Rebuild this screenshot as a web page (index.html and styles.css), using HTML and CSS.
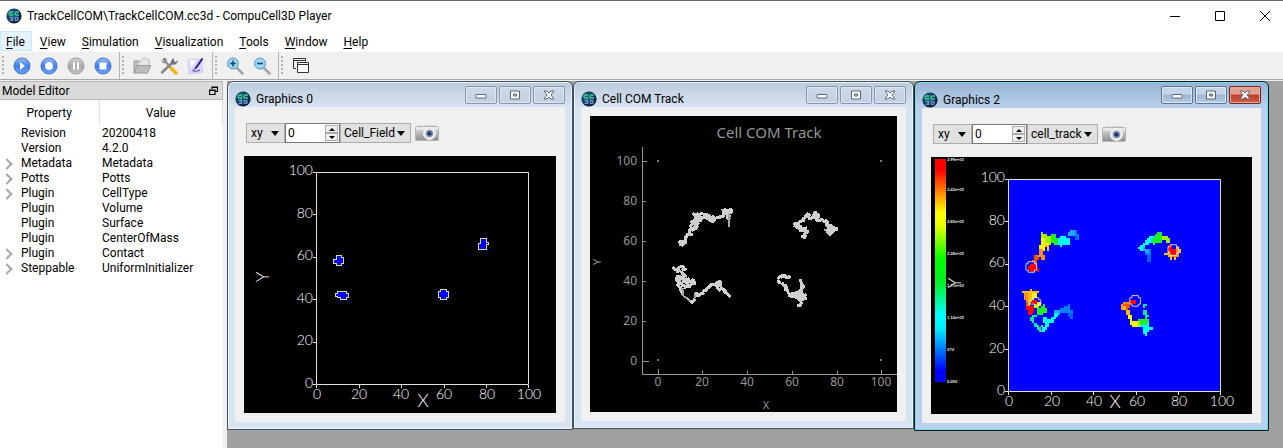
FILE: index.html
```html
<!DOCTYPE html>
<html lang="en">
<head>
    <meta charset="UTF-8">
    <meta name="viewport" content="width=device-width, initial-scale=1.0">
    <title>TrackCellCOM\TrackCellCOM.cc3d - CompuCell3D Player</title>
    <link rel="stylesheet" href="styles.css">
</head>
<body>
    <!-- shared icons -->
    <svg class="defs" width="0" height="0" aria-hidden="true">
        <defs>
            <radialGradient id="globe" cx="40%" cy="40%" r="60%">
                <stop offset="0" stop-color="#1c7d86"/>
                <stop offset="0.6" stop-color="#12406e"/>
                <stop offset="1" stop-color="#0a1836"/>
            </radialGradient>
            <linearGradient id="blueBall" x1="0" y1="0" x2="0" y2="1">
                <stop offset="0" stop-color="#9cc0fb"/>
                <stop offset="0.5" stop-color="#3f7cf0"/>
                <stop offset="1" stop-color="#6ea6ff"/>
            </linearGradient>
            <linearGradient id="grayBall" x1="0" y1="0" x2="0" y2="1">
                <stop offset="0" stop-color="#d6d6d6"/>
                <stop offset="0.5" stop-color="#a9a9a9"/>
                <stop offset="1" stop-color="#c4c4c4"/>
            </linearGradient>
            <linearGradient id="silver" x1="0" y1="0" x2="0" y2="1">
                <stop offset="0" stop-color="#f2f2f2"/>
                <stop offset="0.3" stop-color="#c9c9c9"/>
                <stop offset="1" stop-color="#8c8c8c"/>
            </linearGradient>
            <linearGradient id="heat" x1="0" y1="0" x2="0" y2="1">
                <stop offset="0" stop-color="#f00"/>
                <stop offset="0.05" stop-color="#f00"/>
                <stop offset="0.24" stop-color="#ff0"/>
                <stop offset="0.3" stop-color="#e6ff00"/>
                <stop offset="0.45" stop-color="#0f0"/>
                <stop offset="0.55" stop-color="#00f020"/>
                <stop offset="0.7" stop-color="#0ff"/>
                <stop offset="0.76" stop-color="#00f0ff"/>
                <stop offset="0.95" stop-color="#00f"/>
                <stop offset="1" stop-color="#00f"/>
            </linearGradient>
            <symbol id="logo" viewBox="0 0 16 16">
                <circle cx="8" cy="8" r="7.6" fill="url(#globe)"/>
                <path d="M7 4H4.500Q3 4 3 5.500T4.500 7H7M13 4h-2.500Q9 4 9 5.500T10.500 7H13" fill="none" stroke="#46c98c" stroke-width="1.300"/>
                <path d="M3.500 9.500h3v3h-3M4.500 11h2M9.500 9.500h2q1.500 1.500 0 3h-2z" fill="none" stroke="#7496c4" stroke-width="1.200"/>
            </symbol>
            <symbol id="camera" viewBox="0 0 24 18">
                <path d="M3 1h4v2H3zM10 1h10l1 2H9z" fill="#d9d9d9"/>
                <rect x="0.500" y="2.500" width="23" height="14" rx="1" fill="url(#silver)" stroke="#b5b5b5"/>
                <path d="M1 5h22" stroke="#f6f6f6"/>
                <circle cx="14.500" cy="9.500" r="6" fill="#e4e4e4" stroke="#fafafa"/>
                <circle cx="14.500" cy="9.500" r="3.500" fill="#7286a4"/>
                <circle cx="14.500" cy="9.500" r="2" fill="#0c2366"/>
                <circle cx="15" cy="9" r="0.600" fill="#bcd3ff"/>
            </symbol>
            <symbol id="win-min" viewBox="0 0 12 10">
                <rect x="1" y="4.500" width="10" height="3.500" rx="0.500" fill="#fff" stroke="#5b6675"/>
            </symbol>
            <symbol id="win-max" viewBox="0 0 12 10">
                <path d="M1.500 1h9v8h-9zM4.500 4v2h3V4z" fill="#fff" fill-rule="evenodd" stroke="#5b6675"/>
            </symbol>
            <symbol id="win-close" viewBox="0 0 12 10">
                <path d="M1 1h3l2 2 2-2h3L8 5l3 4H8L6 7 4 9H1l3-4z" fill="#fff" stroke="#5b6675"/>
            </symbol>
        </defs>
    </svg>

    <header class="titlebar">
        <svg class="logo"><use href="#logo"/></svg>
        <h1>TrackCellCOM\TrackCellCOM.cc3d - CompuCell3D Player</h1>
        <div class="titlebar-buttons">
            <button aria-label="Minimize"><svg viewBox="0 0 13 13"><path d="M1 6.500h10" /></svg></button>
            <button aria-label="Maximize"><svg viewBox="0 0 13 13"><path d="M1.500 1.500h9v9h-9z"/></svg></button>
            <button aria-label="Close"><svg viewBox="0 0 13 13"><path d="M1 1l10 10M11 1L1 11"/></svg></button>
        </div>
    </header>

    <nav class="menubar">
        <button class="active"><u>F</u>ile</button>
        <button><u>V</u>iew</button>
        <button><u>S</u>imulation</button>
        <button><u>V</u>isualization</button>
        <button><u>T</u>ools</button>
        <button><u>W</u>indow</button>
        <button><u>H</u>elp</button>
    </nav>

    <div class="toolbar">
        <div class="tool-group">
            <span class="grip"></span>
            <button aria-label="Play"><svg viewBox="0 0 18 18"><circle cx="9" cy="9" r="8" fill="url(#blueBall)" stroke="#4a72c4"/><path d="M7 5l5 4-5 4z" fill="#fff"/></svg></button>
            <button aria-label="Step"><svg viewBox="0 0 18 18"><circle cx="9" cy="9" r="8" fill="url(#blueBall)" stroke="#4a72c4"/><circle cx="9" cy="9" r="4" fill="#fff"/></svg></button>
            <button aria-label="Pause"><svg viewBox="0 0 18 18"><circle cx="9" cy="9" r="8" fill="url(#grayBall)" stroke="#a0a0a0"/><path d="M6 5.500h2v7H6zM10 5.500h2v7h-2z" fill="#fff"/></svg></button>
            <button aria-label="Stop"><svg viewBox="0 0 18 18"><circle cx="9" cy="9" r="8" fill="url(#blueBall)" stroke="#4a72c4"/><path d="M5.500 5.500h7v7h-7z" fill="#fff"/></svg></button>
        </div>
        <div class="tool-group">
            <span class="grip"></span>
            <button aria-label="Open"><svg viewBox="0 0 18 18"><path d="M1 4h5l1 2h6v3H5l-4 7z" fill="#c0c0c0" stroke="#999"/><path d="M5 6l6-5 5 2v6H5z" fill="#e8e8e8" stroke="#b8b8b8"/><path d="M1 16L4 8.500h14L14.500 16z" fill="#bcbcbc" stroke="#999"/></svg></button>
            <button aria-label="Settings"><svg viewBox="0 0 18 18"><path d="M3 2l12 13" stroke="#848b91" stroke-width="2"/><path d="M1 2.500l2.500 2.500L5 3.500 3 1q3-1 4 2 0 2-2 3-3 1-4-3.500z" fill="#8a9298"/><path d="M11 11l5 5" stroke="#f2b71c" stroke-width="3.500" stroke-linecap="round"/><path d="M2 15.500L12 6" stroke="#83898d" stroke-width="2.500" stroke-linecap="round"/><path d="M11 6q-.5-3.500 3-5v3l2 1 2-2q0 4-4.500 5z" fill="#6f767b"/></svg></button>
            <button aria-label="Edit"><svg viewBox="0 0 18 18"><path d="M1 3l13-1 2 13-14 2z" fill="#dcd6fa" stroke="#cfc9f2"/><path d="M2 3l8 0-6 8z" fill="#f7f5ff"/><path d="M15.500 1.500L8.500 11.500" stroke="#2d1a8c" stroke-width="2"/><path d="M8.500 11l-3 3M6 14q4 1 7-1" fill="none" stroke="#5038b8"/></svg></button>
        </div>
        <div class="tool-group">
            <span class="grip"></span>
            <button aria-label="Zoom in"><svg viewBox="0 0 18 18"><path d="M11 11l5.500 5.500" stroke="#a4a4a4" stroke-width="2.500" stroke-linecap="round"/><circle cx="7" cy="6.500" r="5.500" fill="#9ed5f2" stroke="#5299c5"/><path d="M4 6.500h6M7 3.500v6" stroke="#164b78" stroke-width="1.600"/></svg></button>
            <button aria-label="Zoom out"><svg viewBox="0 0 18 18"><path d="M11 11l5.500 5.500" stroke="#a4a4a4" stroke-width="2.500" stroke-linecap="round"/><circle cx="7" cy="6.500" r="5.500" fill="#9ed5f2" stroke="#5299c5"/><path d="M4 6.500h6" stroke="#164b78" stroke-width="1.600"/></svg></button>
        </div>
        <div class="tool-group">
            <span class="grip"></span>
            <button aria-label="Cascade windows"><svg viewBox="0 0 18 18"><path d="M4 11.500H1.500v-10h12v3M1.500 3.500h12" fill="none" stroke="#333"/><path d="M5.500 5.500h11v10h-11zM5.500 7.500h11" fill="#fff" stroke="#333"/></svg></button>
        </div>
    </div>

    <main class="workspace">
        <aside class="dock">
            <div class="dock-title">
                <h2>Model Editor</h2>
                <button aria-label="Float"><svg viewBox="0 0 9 9"><path d="M3 3V1h5.500v4.500H6M3 1.500h5.500" fill="none" stroke="#000" stroke-width="1.200"/><path d="M.5 4h5.500v4.500H.5zM.5 4.500H6" fill="none" stroke="#000" stroke-width="1.200"/></svg></button>
            </div>
            <table class="tree">
                <colgroup><col class="col-arrow"><col class="col-property"><col></colgroup>
                <thead>
                    <tr><th colspan="2">Property</th><th>Value</th></tr>
                </thead>
                <tbody>
                    <tr><td></td><td>Revision</td><td>20200418</td></tr>
                    <tr><td></td><td>Version</td><td>4.2.0</td></tr>
                    <tr class="branch"><td></td><td>Metadata</td><td>Metadata</td></tr>
                    <tr class="branch"><td></td><td>Potts</td><td>Potts</td></tr>
                    <tr class="branch"><td></td><td>Plugin</td><td>CellType</td></tr>
                    <tr><td></td><td>Plugin</td><td>Volume</td></tr>
                    <tr><td></td><td>Plugin</td><td>Surface</td></tr>
                    <tr><td></td><td>Plugin</td><td>CenterOfMass</td></tr>
                    <tr class="branch"><td></td><td>Plugin</td><td>Contact</td></tr>
                    <tr class="branch"><td></td><td>Steppable</td><td>UniformInitializer</td></tr>
                </tbody>
            </table>
        </aside>

        <div class="mdi">
            <section class="subwindow win-graphics0">
                <div class="sub-title">
                    <svg class="logo"><use href="#logo"/></svg>
                    <h2>Graphics 0</h2>
                    <div class="sub-buttons">
                        <button aria-label="Minimize"><svg><use href="#win-min"/></svg></button>
                        <button aria-label="Maximize"><svg><use href="#win-max"/></svg></button>
                        <button aria-label="Close"><svg><use href="#win-close"/></svg></button>
                    </div>
                </div>
                <div class="sub-body">
                    <div class="controls">
                        <select class="plane" aria-label="Plane"><option>xy</option></select>
                        <div class="spin">
                            <input type="text" value="0" aria-label="Slice">
                            <div class="spin-buttons"><button aria-label="Up"></button><button aria-label="Down"></button></div>
                        </div>
                        <select class="field" aria-label="Field"><option>Cell_Field</option></select>
                        <button class="snapshot" aria-label="Screenshot"><svg><use href="#camera"/></svg></button>
                    </div>
                    <svg class="canvas vtk" viewBox="0 0 312 257">
                        <path class="frame" d="M72.500 16.500h212v212h-212z"/>
                        <path class="frame" d="M69 16.500h3M69 58.500h3M69 101.500h3M69 143.500h3M69 186.500h3M69 228.500h3M72.500 229v3M115.500 229v3M157.500 229v3M200.500 229v3M242.500 229v3M284.500 229v3"/>
                        <g text-anchor="end">
                            <text x="69" y="19">100</text>
                            <text x="69" y="62">80</text>
                            <text x="69" y="104">60</text>
                            <text x="69" y="147">40</text>
                            <text x="69" y="189">20</text>
                            <text x="69" y="232">0</text>
                        </g>
                        <g text-anchor="middle">
                            <text x="73" y="243">0</text>
                            <text x="115" y="243">20</text>
                            <text x="157" y="243">40</text>
                            <text x="200" y="243">60</text>
                            <text x="243" y="243">80</text>
                            <text x="285" y="243">100</text>
                            <text class="axis-name" x="179" y="251">X</text>
                            <text class="axis-name" transform="translate(25 121) rotate(-90)">Y</text>
                        </g>
                        <!-- cells -->
                        <g fill="#00f" stroke="#dcdc78" shape-rendering="crispEdges">
                            <path d="M92.500 99.500h5v2h2v6h-2v2h-5v-2h-3v-4h3z"/>
                            <path d="M93.500 135.500h9v2h2v4h-2v2h-6v-2h-3v-1h-2v-3h2z"/>
                            <path d="M236.500 82.500h6v4h2v2h-2v5h-8v-6h2z"/>
                            <path d="M196.500 133.500h6v2h2v6h-2v2h-6v-2h-2v-6h2z"/>
                        </g>
                    </svg>
                </div>
            </section>

            <section class="subwindow win-track">
                <div class="sub-title">
                    <svg class="logo"><use href="#logo"/></svg>
                    <h2>Cell COM Track</h2>
                    <div class="sub-buttons">
                        <button aria-label="Minimize"><svg><use href="#win-min"/></svg></button>
                        <button aria-label="Maximize"><svg><use href="#win-max"/></svg></button>
                        <button aria-label="Close"><svg><use href="#win-close"/></svg></button>
                    </div>
                </div>
                <div class="sub-body plot-body">
                    <svg class="canvas plot" viewBox="0 0 307 296">
                        <text class="plot-title" x="179" y="22" text-anchor="middle">Cell COM Track</text>
                        <path class="axis" d="M52.500 31v227.500H307M53 45.500h4M53 85.500h3M53 125.500h3M53 165.500h3M53 205.500h3M53 245.500h6M68.500 258v-5M112.500 258v-3M157.500 258v-3M202.500 258v-3M247.500 258v-3M291.500 258v-4"/>
                        <g text-anchor="end">
                            <text x="47" y="49">100</text>
                            <text x="47" y="89">80</text>
                            <text x="47" y="129">60</text>
                            <text x="47" y="169">40</text>
                            <text x="47" y="209">20</text>
                            <text x="47" y="249">0</text>
                        </g>
                        <g text-anchor="middle">
                            <text x="68" y="270">0</text>
                            <text x="112" y="270">20</text>
                            <text x="157" y="270">40</text>
                            <text x="202" y="270">60</text>
                            <text x="247" y="270">80</text>
                            <text x="291" y="270">100</text>
                            <text class="small" x="176" y="293">X</text>
                            <text class="small" transform="translate(11 146) rotate(-90)">Y</text>
                        </g>
                        <path d="M67 44h2v2h-2zM290 44h2v2h-2zM67 243h2v2h-2zM290 243h2v2h-2z" fill="#777"/>
                        <!-- centre of mass tracks -->
                        <svg x="70" y="84" width="190" height="115" viewBox="0 0 570 345">
                            <g class="track">
                                <path d="M56 129l6-6 8 0 6 4 6-1M58 132l10 4 6-8M78 125l-2-12 5-5 2-6 8 2 6-1-10-3 1-8 6-6-2-10 6-5-4-8 8 4 4 8-2 10-8 6 14-6 2-8M98 38l4 5 8 2 6-5M104 43l6 9M112 48l12-8 10 4 8 0 10 8-8 5-8-6-12 4-10 8-12 2-6 8M106 60l20-8M104 70l14-8 8-8M108 76l8-8M142 47l10 8 8-5 6 5-4 8-8 1-6-6 16-2 8-4 6 2 4-6 6 4 4-8 4-8 4-4 6 0 4-4 4 2 1 6-8 2-6 6 8 2-4 8-6 3M206 45l-4 8 7 6"/>
                                <path d="M401 76l6-6 6 5 4-8 8-5 8 0-5-5 8-4 2-8 6-4 4 4-3 9 10 0 6-9 6 5 4-8 6 5-4 8-6 5 10 2 8-3 8 5 6-2 4 6-4 5 6 4M402 76l10 6 8-6 0 8 10 4 6-4M416 84l6 8 6 0 8-4 0-8 2 14 7 2-8 2-5 8-6 4 8 3 4-8M500 68l6 8 2 8-2 8M500 82l12-8 4 6 10 5 7 2-10 4-8 6-4 7-8-6-2-8 12-8"/>
                                <path d="M38 202l6 6 8 0 6-6 8-4 6 4-4 8 8-4 3 4M48 208l6 8 6-8M64 213l4 8 6 6-8 8M72 225l8 4M52 225l-2 16 8 6-6 10 8 4 2 8 4 10 2 6M50 235l8-8 6 6-8 8 6 8 6 8 8 0M66 237l14 6 8-8M68 230l12 20 8 8M66 246l20-6 6 6 8-8 2 8 4 3-12 3-6 8-10-3-4 10M92 304l4 4 6-6 3-6M105 283l6-4 3 6-2 6M114 289l6-6 10-5-4 6M128 275l6-6 4 4 2-8 8-4 2-6 6-2-4 6M152 252l8 2 10 2-2-8 6 0 6-6 0 10-4 6M172 248l2 18 8 6M180 252l4 12 6 4 4 8 2 6M194 268l4 10 6 4 4 8M208 288l4 3"/>
                                <path d="M352 238l8-8 8-4 8-1 0 8 10 0 4-6M362 233l8-4M356 240v8l8-2M366 248l4 8 6 0 4 6-6 6 8 0 2 6M372 268l8 0 4 8 4-2M384 276l4 6 2 8M389 285l8-4 6 2 4-5 12-2M392 288l10 3 8-8M420 237l3 8 0 10 8 3-4 8M424 258l2 14M412 278l10-8 4 8-12 14 20-6 6-2M404 284l18-8 10 10-12 14-12-8M410 290l14-14M428 288l8 6 0 6M414 298l14 2 0-8M422 300l2 10-6 8-5-2 10-2"/>
                            </g>
                            <g class="track-thin">
                                <path d="M208 40v42M491 91h6M67 275l4 14 8 4 6 6 6 4M103 298l2-15M66 265l3 12"/>
                            </g>
                            <g class="track-core">
                                <path d="M102 70l10-16 12-6M110 60l16-4M186 36l14-4M461 43l10-2M455 49l14-1M508 80l6 14 8-8M74 236l8 8M78 244l12-2M410 286l16-8M408 284l14 12 4-10"/>
                            </g>
                        </svg>
                    </svg>
                </div>
            </section>

            <section class="subwindow win-graphics2 focused">
                <div class="sub-title">
                    <svg class="logo"><use href="#logo"/></svg>
                    <h2>Graphics 2</h2>
                    <div class="sub-buttons">
                        <button aria-label="Minimize"><svg><use href="#win-min"/></svg></button>
                        <button aria-label="Maximize"><svg><use href="#win-max"/></svg></button>
                        <button class="close" aria-label="Close"><svg><use href="#win-close"/></svg></button>
                    </div>
                </div>
                <div class="sub-body">
                    <div class="controls">
                        <select class="plane" aria-label="Plane"><option>xy</option></select>
                        <div class="spin">
                            <input type="text" value="0" aria-label="Slice">
                            <div class="spin-buttons"><button aria-label="Up"></button><button aria-label="Down"></button></div>
                        </div>
                        <select class="field" aria-label="Field"><option>cell_track</option></select>
                        <button class="snapshot" aria-label="Screenshot"><svg><use href="#camera"/></svg></button>
                    </div>
                    <svg class="canvas vtk" viewBox="0 0 321 257">
                        <rect x="4" y="2" width="11" height="223" fill="url(#heat)"/>
                        <g class="legend">
                            <text x="16" y="4">3.99e+03</text>
                            <text x="16" y="34">3.42e+03</text>
                            <text x="16" y="66">2.85e+03</text>
                            <text x="16" y="98">2.28e+03</text>
                            <text x="16" y="130">1.71e+03</text>
                            <text x="16" y="162">1.14e+03</text>
                            <text x="16" y="194">570</text>
                            <text x="16" y="226">0.000</text>
                        </g>
                        <rect x="78" y="22" width="212" height="212" fill="#00f"/>
                        <!-- one unit is one lattice site -->
                        <svg x="78" y="22" width="212" height="212" viewBox="0 0 100 100" shape-rendering="crispEdges">
                            <path fill="#0080ff" d="M28 25h1v-1h3v2h1v3h-1v-1h-1v-1h-3zM65 33h2v6h-2v-3h-1v-1h1zM24 61h2v-1h2v-1h1v3h1v2h-2v-1h-4z"/>
                            <path fill="#0060f0" d="M31 27h1v2h-1zM65 36h2v3h-2zM28 63h2v3h-1v-1h-1z"/>
                            <path fill="#20a8ff" d="M29 24h2v3h-3v-2h1zM62 32h2v1h2v2h-2v-1h-2zM21 62h3v2h-3z"/>
                            <path fill="#0ff" d="M22 28h2v-1h3v1h2v3h-4v1h-1v-1h-2zM61 32h1v-1h1v-1h1v-1h1v-1h1v-1h3v3h-3v1h-2v1h-1v2h-1v-1h-1zM15 69h1v1h1v-2h-1v-3h2v1h2v-1h1v-2h2v2h-1v1h-1v2h-2v2h-1v1h-1v1h-1zM62 68h4v2h2v1h-2v1h-1v2h-1v-1h-1v-3h-1z"/>
                            <path fill="#10e890" d="M10 65h1v-1h2v1h-1v3h1v1h1v1h1v1h1v1h-2v-1h-1v-1h-1v-2h-1v-1h-1zM67 28h2v3h-1v-1h-1zM63 59h2v1h-1v2h1v2h1v1h-1v1h1v2h-2v-4h-1v-2h1v-1h-1z"/>
                            <path fill="#20f020" d="M18 27h2v-1h2v2h1v3h-2v-1h-3zM69 26h1v-1h2v2h1v2h-1v1h-3v1h-1v-3h1zM13 61h2v-1h1v-1h1v2h1v2h-2v1h-3zM61 66h3v-1h1v4h-3v-1h-1z"/>
                            <path fill="#a0f000" d="M15 25h1v1h2v1h2v4h-3v-3h-2zM72 27h3v1h1v2h-2v-1h-2zM60 67h2v3h-2zM12 59h2v2h-2z"/>
                            <path fill="#f8f800" d="M15 28h2v2h2v2h-2v2h-3v-3h1zM10 54h3v2h-1v2h-2zM13 58h2v2h-2zM56 62h1v2h1v3h3v3h-3v-1h-1v-3h-1z"/>
                            <path fill="#ffc000" d="M10 52h1v1h3v1h-3v4h-1v2h-1v-6h-3v-1h4zM17 31h2v3h-1v-2h-1zM79 32h1v1h1v2h-1v2h-1v1h-1v-1h-1v1h-1v-1h-1v-1h-2v-1h2v1h4zM54 60h2v2h1v2h-2v-2h-1z"/>
                            <path fill="#ff8c18" d="M7 54h2v5h-1v-2h-1zM14 33h2v3h1v2h-2v-1h-2v-1h1zM75 34h2v1h2v-2h1v4h-3v-1h-2zM53 59h1v-1h3v1h-2v1h-1v2h-1z"/>
                            <path fill="#f85000" d="M12 36h1v1h1v1h-1v2h-1v-1h-1v-1h1zM8 58h1v2h-1zM54 59h3v2h-1v1h-1v-2h-1zM75 31h1v3h-1z"/>
                            <path fill="#f00" d="M9 41h1v-1h3v2h1v2h-1v-1h-1v1h-2v-1h-1zM8 60h4v3h-1v1h-2v-2h-1zM11 57h2v2h-2zM75 31h2v2h2v3h-3v-2h-1zM57 57h3v2h-3z"/>
                            <g class="cell-border">
                                <path d="M9 39h3v1h1v3h-1v1H9v-1H8v-3h1z"/>
                                <path d="M11 56h3v1h1v2h-1v1h-2v-1h-2v-2h1z"/>
                                <path d="M76 31h3v1h1v3h-1v1h-3v-1h-1v-3h1z"/>
                                <path d="M58 55h3v1h1v3h-1v1h-3v-1h-1v-3h1z"/>
                            </g>
                        </svg>
                        <path class="frame" d="M77.500 22.500h212v212h-212z"/>
                        <path class="frame" d="M74 22.500h3M74 64.500h3M74 107.500h3M74 149.500h3M74 192.500h3M74 234.500h3M77.500 235v3M120.500 235v3M162.500 235v3M205.500 235v3M247.500 235v3M289.500 235v3"/>
                        <g text-anchor="end">
                            <text x="74" y="25">100</text>
                            <text x="74" y="68">80</text>
                            <text x="74" y="110">60</text>
                            <text x="74" y="153">40</text>
                            <text x="74" y="196">20</text>
                            <text x="74" y="238">0</text>
                        </g>
                        <g text-anchor="middle">
                            <text x="78" y="249">0</text>
                            <text x="121" y="249">20</text>
                            <text x="163" y="249">40</text>
                            <text x="206" y="249">60</text>
                            <text x="248" y="249">80</text>
                            <text x="291" y="249">100</text>
                            <text class="axis-name" x="184" y="251">X</text>
                            <text class="axis-name" transform="translate(30 126) rotate(-90)">Y</text>
                        </g>
                    </svg>
                </div>
            </section>
        </div>
    </main>
</body>
</html>
```
FILE: styles.css
```css
* {
    box-sizing: border-box;
}
body {
    margin: 0;
    min-height: 100vh;
    display: flex;
    flex-direction: column;
    overflow: hidden;
    font-family: Roboto, "Open Sans", sans-serif;
    font-size: 12px;
    color: #000;
    background-color: #f0f0f0;
}
h1, h2 {
    margin: 0;
    font-size: 12px;
    font-weight: normal;
    white-space: nowrap;
}
button {
    padding: 0;
    border: none;
    background: none;
    font: inherit;
    color: inherit;
}
svg {
    display: block;
}
.defs {
    position: absolute;
}
.logo {
    width: 16px;
    height: 16px;
    flex: none;
}

/* main window */
.titlebar {
    display: flex;
    align-items: center;
    gap: 5px;
    height: 31px;
    padding: 0 11px 0 6px;
    border-top: 1px solid #666;
    background-color: #fff;
}
.titlebar-buttons {
    display: flex;
    gap: 32px;
    margin-left: auto;
}
.titlebar-buttons svg {
    width: 13px;
    height: 13px;
    fill: none;
    stroke: #000;
}
.menubar {
    display: flex;
    height: 21px;
    background-color: #fff;
}
.menubar button {
    height: 20px;
    padding: 0 7px;
    border: 1px solid transparent;
    line-height: 20px;
}
.menubar u {
    text-underline-offset: 2px;
}
.menubar .active {
    padding: 0 6px 0 5px;
    background-color: #e5f3ff;
    border-color: #cce8ff;
}
.toolbar {
    display: flex;
    height: 28px;
    border-bottom: 1px solid #a8a8a8;
}
.tool-group {
    display: flex;
    align-items: center;
    padding-right: 3px;
    border-right: 1px solid #b4b4b4;
}
.tool-group:last-child {
    border-right: none;
}
.tool-group button {
    display: flex;
    justify-content: center;
    width: 27px;
}
.tool-group svg {
    width: 18px;
    height: 18px;
}
.grip {
    width: 2px;
    height: 19px;
    margin: 0 4px 0 2px;
    background: repeating-linear-gradient(#b4b4b4 0 2px, transparent 2px 4px);
}
.workspace {
    flex: 1;
    display: flex;
    gap: 4px;
    padding-top: 1px;
}

/* model editor */
.dock {
    width: 223px;
    flex: none;
    background-color: #fff;
}
.dock-title {
    display: flex;
    align-items: center;
    justify-content: space-between;
    height: 19px;
    padding: 0 4px 0 2px;
    border: 1px solid #b8b8b8;
    border-left: none;
    background-color: #dadada;
}
.dock-title svg {
    width: 9px;
    height: 9px;
}
.tree {
    width: 100%;
    border-collapse: collapse;
    table-layout: fixed;
}
.col-arrow {
    width: 18px;
}
.col-property {
    width: 81px;
}
.tree th {
    height: 26px;
    padding: 0;
    font-weight: normal;
    border-right: 1px solid #e0e0e0;
}
.tree td {
    height: 15px;
    padding: 0 0 0 3px;
    line-height: 15px;
    white-space: nowrap;
}
.branch td:first-child::before {
    content: "";
    display: block;
    width: 6px;
    height: 6px;
    border: solid #a8a8a8;
    border-width: 2px 2px 0 0;
    transform: rotate(45deg);
}

/* sub windows */
.mdi {
    position: relative;
    flex: 1;
    background-color: #a0a0a0;
}
.subwindow {
    position: absolute;
    top: 0;
    padding: 0 7px 7px;
    border: 1px solid #43505e;
    border-radius: 6px 6px 0 0;
    background: linear-gradient(#bccbdd, #d7e4f1 26px);
    box-shadow: inset 0 0 0 1px #eaf2fa;
}
.win-graphics0 {
    left: 0;
    width: 346px;
}
.win-track {
    left: 346px;
    width: 341px;
}
.win-graphics2 {
    left: 687px;
    width: 355px;
}
.focused {
    border-color: #101820;
    background: linear-gradient(#98b4d2, #b9d1ea 26px);
    box-shadow: inset 0 0 0 1px #6fdcf4;
}
.sub-title {
    display: flex;
    align-items: flex-end;
    gap: 5px;
    height: 25px;
    line-height: 16px;
}
.focused .sub-title {
    height: 26px;
}
.sub-buttons {
    display: flex;
    align-self: flex-start;
    gap: 2px;
    margin: 4px 0 0 auto;
}
.sub-buttons button {
    display: flex;
    align-items: center;
    justify-content: center;
    width: 32px;
    height: 18px;
    border: 1px solid #8795a8;
    border-radius: 2px;
    background: linear-gradient(#cdd9e8, #c2d0e2);
    box-shadow: inset 0 0 0 1px #dde7f2;
}
.sub-buttons svg {
    width: 12px;
    height: 10px;
}
.focused .sub-buttons button {
    border-color: #5d7590;
    background: linear-gradient(#c3d5e9 45%, #9db6d2 50%, #b5cde6);
}
.focused .sub-buttons .close {
    border-color: #6b2a25;
    background: linear-gradient(#e0a090 45%, #c03a25 50%, #d06048);
    box-shadow: inset 0 0 0 1px #e8a898;
}
.sub-body {
    padding: 16px 9px 9px;
    background-color: #f0f0f0;
}
.plot-body {
    padding-top: 9px;
}
.controls {
    display: flex;
    height: 20px;
    margin: 0 0 13px 2px;
}
select {
    appearance: none;
    width: 39px;
    padding: 0 0 0 4px;
    border: 1px solid #adadad;
    border-radius: 0;
    background: #e1e1e1 url("data:image/svg+xml,%3Csvg xmlns='http://www.w3.org/2000/svg' width='8' height='5'%3E%3Cpath d='M0 0h8L4 5z'/%3E%3C/svg%3E") no-repeat right 5px center;
    font: inherit;
    color: inherit;
}
select.field {
    width: 71px;
    padding-left: 3px;
}
.spin {
    display: flex;
    width: 55px;
    border: 1px solid #7a7a7a;
    background-color: #fff;
}
.spin input {
    flex: 1;
    min-width: 0;
    padding: 0 0 0 2px;
    border: none;
    background: none;
    font: inherit;
}
.spin-buttons {
    display: flex;
    flex-direction: column;
    width: 15px;
    padding: 1px;
}
.spin-buttons button {
    flex: 1;
    display: flex;
    align-items: center;
    justify-content: center;
    border: 1px solid #adadad;
    background-color: #f0f0f0;
}
.spin-buttons button::before {
    content: "";
    border: solid transparent;
    border-width: 0 3px 3px;
    border-bottom-color: #000;
}
.spin-buttons button:last-child::before {
    border-width: 3px 3px 0;
    border-top-color: #000;
}
.snapshot {
    margin-left: 4px;
}
.snapshot svg {
    width: 24px;
    height: 18px;
}

/* plots */
.canvas {
    width: 100%;
    height: auto;
    background-color: #000;
}
.vtk text {
    font-family: Lato, sans-serif;
    font-size: 14px;
    font-weight: 300;
    fill: #fff;
}
.vtk .axis-name {
    font-size: 18px;
}
.frame {
    fill: none;
    stroke: #e0e0e0;
}
.vtk .legend text {
    font-size: 4px;
    font-weight: bold;
    font-style: italic;
}
.cell-border {
    fill: none;
    stroke: #f4ecc0;
    stroke-width: 0.4;
    shape-rendering: auto;
}
.plot text {
    font-family: "Noto Sans", sans-serif;
    font-size: 12px;
    fill: #969696;
}
.plot .plot-title {
    font-size: 15px;
}
.plot .small {
    font-size: 11px;
}
.axis {
    fill: none;
    stroke: #969696;
}
.track, .track-thin, .track-core {
    fill: none;
    stroke: #cfcfcf;
    stroke-width: 9;
    stroke-linejoin: bevel;
    shape-rendering: crispEdges;
}
.track-thin {
    stroke: #a8a8a8;
    stroke-width: 6;
}
.track-core {
    stroke-width: 16;
}
```
